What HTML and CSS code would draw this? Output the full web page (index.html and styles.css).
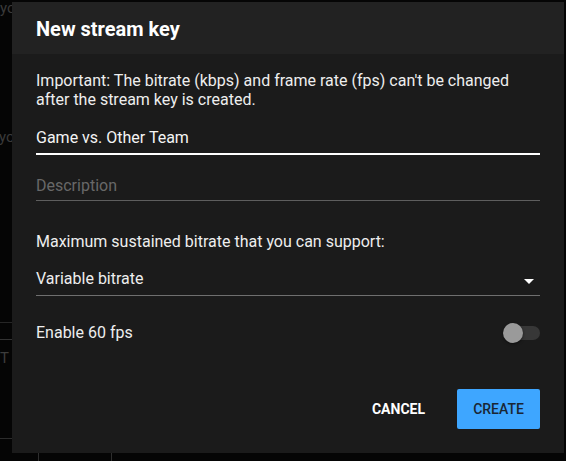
FILE: index.html
```html
<!DOCTYPE html>
<html lang="en">
<head>
<meta charset="utf-8">
<title>New stream key</title>
<link rel="stylesheet" href="styles.css">
</head>
<body>
<div class="backdrop">
  <span class="bg-text bg-text-top">you all</span>
  <span class="bg-text bg-text-mid">yo</span>
  <span class="bg-line bg-line-a"></span>
  <span class="bg-line bg-line-b"></span>
  <span class="bg-text bg-text-t">T</span>
  <span class="bg-line bg-line-c"></span>
  <span class="bg-vline bg-vline-a"></span>
  <span class="bg-vline bg-vline-b"></span>
</div>

<div class="dialog" role="dialog" aria-labelledby="dlg-title">
  <div class="dialog-header">
    <h2 id="dlg-title" class="dialog-title">New stream key</h2>
  </div>
  <div class="dialog-body">
    <p class="notice">Important: The bitrate (kbps) and frame rate (fps) can't be changed after the stream key is created.</p>

    <div class="field field-focused">
      <span class="field-value">Game vs. Other Team</span>
    </div>

    <div class="field field-desc">
      <span class="field-placeholder">Description</span>
    </div>

    <p class="label">Maximum sustained bitrate that you can support:</p>

    <div class="field field-select">
      <span class="field-value">Variable bitrate</span>
      <svg class="caret" width="10" height="5" viewBox="0 0 10 5" aria-hidden="true"><path d="M0 0 H10 L5 5 Z" fill="#ffffff"/></svg>
    </div>

    <div class="toggle-row">
      <span class="toggle-label">Enable 60 fps</span>
      <span class="toggle"><span class="toggle-track"></span><span class="toggle-knob"></span></span>
    </div>

    <div class="actions">
      <button class="btn btn-text">CANCEL</button>
      <button class="btn btn-primary">CREATE</button>
    </div>
  </div>
</div>
</body>
</html>
```

FILE: styles.css
```css
* { box-sizing: border-box; }

html, body {
  margin: 0;
  padding: 0;
}

body {
  width: 566px;
  height: 461px;
  overflow: hidden;
  position: relative;
  background: #050505;
  font-family: Roboto, "Liberation Sans", Arial, sans-serif;
  color: #eeeeee;
}

/* ---------- backdrop (page behind the overlay) ---------- */
.backdrop {
  position: absolute;
  inset: 0;
}
.bg-text {
  position: absolute;
  color: #3a3a3a;
  font-size: 15px;
  line-height: 16px;
  white-space: nowrap;
}
.bg-text-top { left: 0; top: 0; }
.bg-text-mid { left: -1px; top: 129px; }
.bg-text-t { left: 0; top: 350px; color: #3c3c3c; }
.bg-line {
  position: absolute;
  left: 0;
  width: 12px;
  height: 1px;
  background: #262626;
}
.bg-line-a { top: 322px; }
.bg-line-b { top: 339px; background: #333; }
.bg-line-c { top: 438px; background: #2c2c2c; }
.bg-vline {
  position: absolute;
  top: 453px;
  width: 1px;
  height: 8px;
  background: #2e2e2e;
}
.bg-vline-a { left: 38px; }
.bg-vline-b { left: 111px; }

/* ---------- dialog ---------- */
.dialog {
  position: absolute;
  left: 12px;
  top: 2px;
  width: 552px;
  height: 451px;
  background: #1b1b1b;
  display: flex;
  flex-direction: column;
}

.dialog-header {
  height: 52px;
  background: #222222;
  padding: 0 24px;
  display: flex;
  align-items: center;
}
.dialog-title {
  margin: 0;
  font-size: 20px;
  font-weight: 700;
  color: #ffffff;
  line-height: 24px;
  padding-top: 1px;
}

.dialog-body {
  flex: 1;
  padding: 17px 24px 24px;
  display: flex;
  flex-direction: column;
}

.notice,
.label {
  margin: 0;
  font-size: 16px;
  line-height: 19px;
  color: #eeeeee;
}

.field {
  display: flex;
  align-items: center;
  font-size: 16px;
  line-height: 20px;
}
.field-focused {
  margin-top: 19px;
  padding-bottom: 5px;
  border-bottom: 2px solid #ffffff;
  color: #f4f4f4;
}
.field-desc {
  margin-top: 21px;
  padding-bottom: 4px;
  border-bottom: 1px solid #5e5e5e;
}
.field-placeholder { color: #686868; }

.label { margin-top: 31px; line-height: 20px; }

.field-select {
  margin-top: 17px;
  padding-bottom: 6px;
  border-bottom: 1px solid #6f6f6f;
  justify-content: space-between;
  color: #eeeeee;
}
.caret {
  margin-right: 6px;
  margin-top: 4px;
}

.toggle-row {
  margin-top: 27px;
  display: flex;
  align-items: center;
  justify-content: space-between;
  font-size: 16px;
  line-height: 20px;
  color: #eeeeee;
}
.toggle {
  position: relative;
  width: 37px;
  height: 20px;
  display: block;
}
.toggle-track {
  position: absolute;
  right: 0;
  top: 3px;
  width: 33px;
  height: 14px;
  border-radius: 7px;
  background: #373737;
}
.toggle-knob {
  position: absolute;
  left: 0;
  top: 0;
  width: 20px;
  height: 20px;
  border-radius: 50%;
  background: #9a9a9a;
  box-shadow: 0 1px 3px rgba(0, 0, 0, 0.5);
}

.actions {
  margin-top: auto;
  display: flex;
  justify-content: flex-end;
  align-items: center;
  gap: 16px;
}
.btn {
  font-family: Roboto, "Liberation Sans", Arial, sans-serif;
  font-size: 14px;
  height: 40px;
  border: 0;
  border-radius: 2px;
  padding: 0 16px;
  cursor: pointer;
  line-height: 40px;
}
.btn-text {
  background: transparent;
  color: #ffffff;
  font-weight: 700;
}
.btn-primary {
  background: #3ea6ff;
  color: #1a2633;
  font-weight: 500;
  width: 83px;
  padding: 0;
}
```
